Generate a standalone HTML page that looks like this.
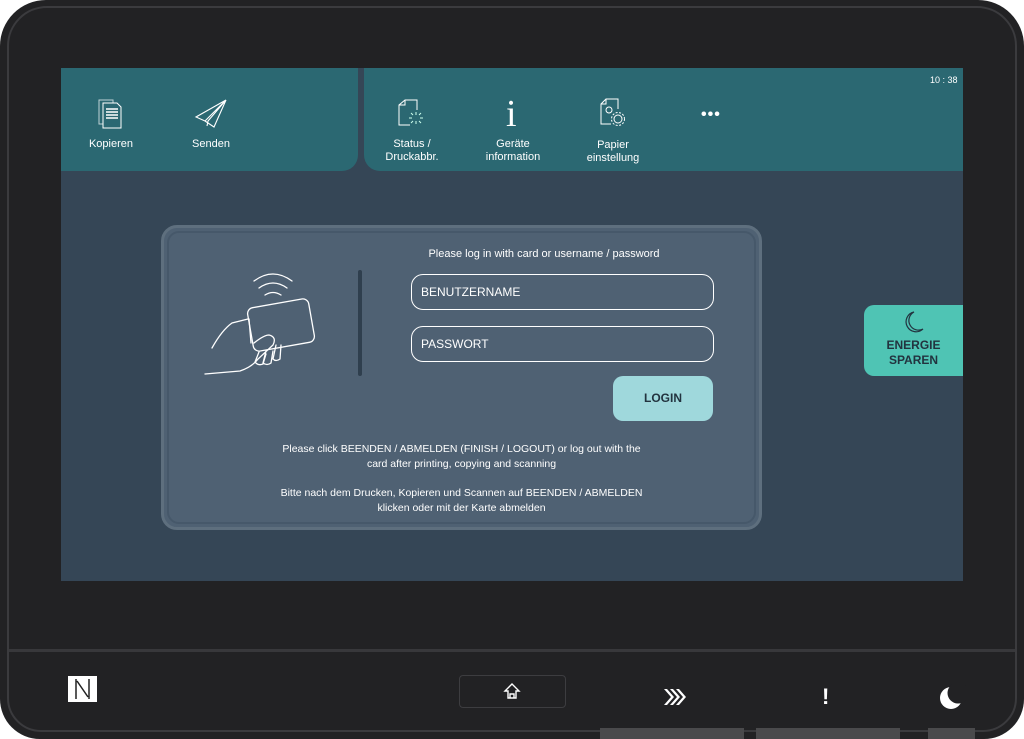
<!DOCTYPE html>
<html><head><meta charset="utf-8"><style>
*{margin:0;padding:0;box-sizing:border-box}
body{width:1024px;height:739px;background:#fff;position:relative;overflow:hidden;font-family:"Liberation Sans",sans-serif;color:#fff}
.dev{position:absolute;left:0;top:0;width:1024px;height:739px;background:#222224;border-radius:46px 46px 40px 40px}
.rim{position:absolute;left:7px;top:6px;width:1010px;height:726px;border:2px solid #3b3b3e;border-radius:40px 40px 34px 34px}
.sep{position:absolute;left:9px;right:9px;top:649px;height:3px;background:#38383b}
.screen{position:absolute;left:61px;top:68px;width:902px;height:513px;background:#354656}
.bar1{position:absolute;left:0;top:0;width:297px;height:103px;background:#2b6872;border-bottom-right-radius:16px}
.bar2{position:absolute;left:303px;top:0;width:599px;height:103px;background:#2b6872;border-bottom-left-radius:16px}
.lbl{position:absolute;font-size:11px;text-align:center;line-height:13px;width:90px}
.ic{position:absolute}
.card{position:absolute;left:100px;top:157px;width:601px;height:305px;border:3px solid #5e6f7e;border-radius:16px;background:#4f6173}
.card .in{position:absolute;inset:3px;border:2px solid #46586a;border-radius:12px}
.field{position:absolute;left:247px;width:303px;height:36px;border:1.5px solid #fff;border-radius:12px;font-size:12px;padding:10px 9px;color:#fff}
.login{position:absolute;left:449px;top:148px;width:100px;height:45px;background:#9fd8dc;border-radius:10px;color:#22333f;font-size:12px;text-align:center;line-height:45px;font-weight:bold}
.txt{position:absolute;left:0;width:595px;text-align:center;font-size:10.5px;line-height:15px}
.eco{position:absolute;left:803px;top:237px;width:99px;height:71px;background:#4fc4b4;border-radius:10px 0 0 10px;color:#22333f;font-size:12px;text-align:center;line-height:15px;padding-top:5px;font-weight:bold}
.tab{position:absolute;top:728px;height:11px;background:#4a4a4c}
</style></head><body>
<div class="dev"></div><div class="rim"></div><div class="sep"></div>
<div class="screen">
 <div class="bar1">
  <svg class="ic" style="left:35px;top:30px" width="30" height="32" viewBox="0 0 30 32" fill="none" stroke="#fff" stroke-width="1"><path d="M3 2h14v24H3z" stroke-opacity=".7"/><path d="M7 5h14l4 4v21H7z" fill="#2b6872"/><path d="M10 11h12M10 14h12M10 17h12M10 20h12" stroke-width="1.6"/></svg>
  <div class="lbl" style="left:5px;top:70px">Kopieren</div>
  <svg class="ic" style="left:133px;top:30px" width="36" height="32" viewBox="0 0 36 32" fill="none" stroke="#fff" stroke-width="1.1"><path d="M32 2L2 19l9 4zM32 2L20 29l-9-6zM32 2L14 23l-1 5"/></svg>
  <div class="lbl" style="left:105px;top:70px">Senden</div>
 </div>
 <div class="bar2">
  <svg class="ic" style="left:32px;top:30px" width="32" height="30" viewBox="0 0 32 30" fill="none" stroke="#fff" stroke-width="1"><path d="M14 27H3V7l6-5h12v10" /><path d="M3 7h6V2"/><path d="M20 14v3M20 23v3M13 20h3M24 20h3M15 15l2 2M25 15l-2 2M15 25l2-2M25 25l-2-2" stroke="#cfe"/></svg>
  <div class="lbl" style="left:3px;top:70px">Status /<br>Druckabbr.</div>
  <div style="position:absolute;left:142px;top:26px;font:38px 'Liberation Serif',serif;line-height:40px">i</div>
  <div class="lbl" style="left:104px;top:70px">Geräte<br>information</div>
  <svg class="ic" style="left:234px;top:30px" width="32" height="32" viewBox="0 0 32 32" fill="none" stroke="#fff" stroke-width="1"><path d="M13 26H3V6l5-5h12v10M3 6h5V1"/><circle cx="11" cy="12" r="3"/><circle cx="20" cy="21" r="4"/><circle cx="20" cy="21" r="6.5" stroke-dasharray="2 1.5"/></svg>
  <div class="lbl" style="left:204px;top:71px">Papier<br>einstellung</div>
  <div style="position:absolute;left:337px;top:38px;font-size:16px;letter-spacing:1px;font-weight:bold">•••</div>
  <div style="position:absolute;left:566px;top:7px;font-size:9px">10 : 38</div>
 </div>
 <div class="card"><div class="in"></div>
  <div style="position:absolute;left:194px;top:42px;width:4px;height:106px;background:#2f3f4e;border-radius:2px"></div>
  <svg style="position:absolute;left:40px;top:35px" width="115" height="120" viewBox="0 0 115 120" fill="none" stroke="#fff" stroke-width="1.3" stroke-linecap="round">
   <path d="M50 18q19-14 38 0M55 25q14-10 28 0M61 32q8-5 16 0"/>
   <rect x="46" y="40" width="62" height="44" rx="6" transform="rotate(-10 77 62)"/>
   <path d="M8 85q10-18 20-25l16-4M45 56l2 24M50 80q10-8 15-8q8 2 4 10l-15 14q-6 8-18 12l-35 3M55 89l-4 10q3 4 8 2l3-10M62 88l-3 12q4 3 8 0l2-12M72 82l-3 14q3 3 7 0l1-14"/>
  </svg>
  <div class="txt" style="top:19px;left:180px;width:400px;font-size:11px">Please log in with card or username / password</div>
  <div class="field" style="top:46px">BENUTZERNAME</div>
  <div class="field" style="top:98px">PASSWORT</div>
  <div class="login">LOGIN</div>
  <div class="txt" style="top:214px">Please click BEENDEN / ABMELDEN (FINISH / LOGOUT) or log out with the<br>card after printing, copying and scanning</div>
  <div class="txt" style="top:258px">Bitte nach dem Drucken, Kopieren und Scannen auf BEENDEN / ABMELDEN<br>klicken oder mit der Karte abmelden</div>
 </div>
 <div class="eco"><svg width="22" height="24" viewBox="0 0 22 24" fill="none" stroke="#22333f" stroke-width="1.2"><path d="M11 2A10 10 0 1 0 20 19A9 9 0 0 1 11 2z"/></svg><br>ENERGIE<br>SPAREN</div>
</div>
<div style="position:absolute;left:68px;top:676px;width:29px;height:26px;background:#fff"></div>
<svg style="position:absolute;left:68px;top:676px" width="29" height="26" viewBox="0 0 29 26" fill="none" stroke="#222" stroke-width="1.5"><path d="M8 3v20M21 3v20M9 5l11 16"/></svg>
<div style="position:absolute;left:459px;top:675px;width:107px;height:33px;border:1.5px solid #3d3d40;border-radius:4px"></div>
<svg style="position:absolute;left:503px;top:682px" width="18" height="18" viewBox="0 0 18 18" fill="none" stroke="#fff" stroke-width="1.4"><path d="M2 9L9 2l7 7h-3v7H5V9z"/><path d="M7 16v-4h4v4"/></svg>
<svg style="position:absolute;left:663px;top:687px" width="24" height="20" viewBox="0 0 24 20" fill="#fff"><path d="M1 2l7 8-7 8h3l7-8-7-8zM7 2l7 8-7 8h3l7-8-7-8zM13 2l7 8-7 8h3l7-8-7-8z"/></svg>
<div style="position:absolute;left:822px;top:684px;font-weight:bold;font-size:22px">!</div>
<svg style="position:absolute;left:938px;top:684px" width="28" height="28" viewBox="0 0 28 28"><circle cx="13" cy="14" r="11" fill="#fff"/><circle cx="20" cy="9" r="10.5" fill="#222224"/></svg>
<div class="tab" style="left:600px;width:144px"></div>
<div class="tab" style="left:756px;width:144px"></div>
<div class="tab" style="left:928px;width:47px"></div>
</body></html>
